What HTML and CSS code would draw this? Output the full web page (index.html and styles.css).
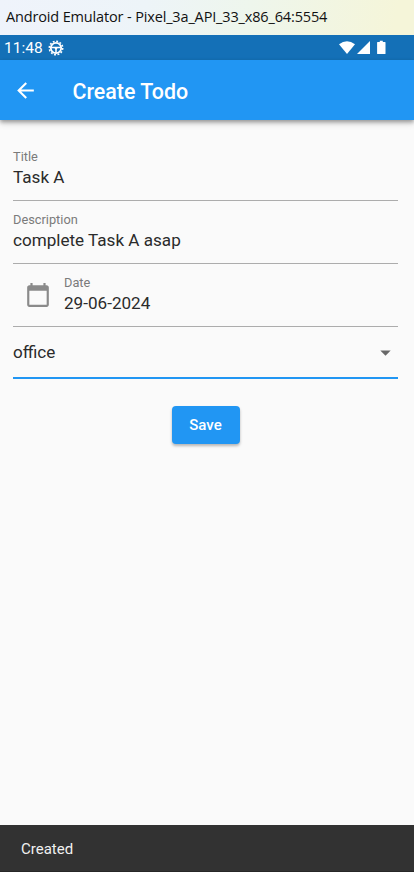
FILE: index.html
```html
<!DOCTYPE html>
<html lang="en">
<head>
<meta charset="utf-8">
<title>Create Todo</title>
<link rel="stylesheet" href="styles.css">
</head>
<body>
<div class="window-title"><span>Android Emulator - Pixel_3a_API_33_x86_64:5554</span></div>
<div class="status">
  <span class="clock">11:48</span>
  <svg class="gear" width="16" height="16" viewBox="0 0 16 16" fill="none" stroke="#fff">
    <circle cx="8" cy="8" r="5.2" stroke-width="1.8"/>
    <circle cx="8" cy="8" r="6.7" stroke-width="1.6" stroke-dasharray="1.9 1.608"/>
    <path d="M3.2 7.6h9.6M8 8v5" stroke-width="1.5"/>
    <path d="M5.8 7.2h4.4L8 10z" fill="#fff" stroke="none"/>
  </svg>
  <svg class="signals" width="48" height="16" viewBox="0 0 48 16" fill="#fff">
    <path d="M0 4.2Q8 -1.8 16 4.2L8 14z"/>
    <path d="M31 1v13H18z"/>
    <path d="M40.8 .8h3v1.3h2.2q.5 0 .5.5v10.9q0 .5-.5.5h-7.4q-.5 0-.5-.5v-10.9q0-.5.5-.5h2.2z"/>
  </svg>
</div>
<header class="appbar">
  <svg width="25" height="25" viewBox="0 0 24 24" fill="#fff"><path d="M20 11H7.83l5.59-5.59L12 4l-8 8 8 8 1.41-1.41L7.83 13H20v-2z"/></svg>
  <h1>Create Todo</h1>
</header>
<main>
  <div class="field"><label>Title</label><div class="value">Task A</div></div>
  <div class="field"><label>Description</label><div class="value">complete Task A asap</div></div>
  <div class="field date">
    <svg width="26" height="26" viewBox="0 0 24 24" fill="#8a8a8a"><path d="M20 3h-1V1h-2v2H7V1H5v2H4c-1.1 0-2 .9-2 2v16c0 1.1.9 2 2 2h16c1.1 0 2-.9 2-2V5c0-1.1-.9-2-2-2zm0 18H4V8h16v13z"/></svg>
    <div><label>Date</label><div class="value">29-06-2024</div></div>
  </div>
  <div class="select">
    <span class="value">office</span>
    <svg width="25" height="25" viewBox="0 0 24 24" fill="#686868"><path d="M7 10l5 5 5-5z"/></svg>
  </div>
  <button class="save">Save</button>
</main>
<footer class="snackbar">Created</footer>
</body>
</html>
```

FILE: styles.css
```css
* { box-sizing: border-box; }
body {
  margin: 0;
  height: 872px;
  display: flex;
  flex-direction: column;
  overflow: hidden;
  background: #fafafa;
  font-family: Roboto, sans-serif;
  color: #2b2b2b;
}
svg { display: block; flex: none; }
.window-title {
  height: 35px;
  padding-left: 6px;
  background: linear-gradient(100deg, #eff3fb 0%, #edf4f8 35%, #eef6ec 60%, #f5f5d9 95%);
  font: 14.5px/34px "Open Sans", "Noto Sans", sans-serif;
  letter-spacing: -0.15px;
  color: #111;
  white-space: nowrap;
}
.status {
  height: 25px;
  padding: 0 27px 0 4px;
  display: flex;
  align-items: center;
  background: #1470b7;
  color: #fff;
}
.clock { font-size: 15.5px; line-height: 25px; width: 44px; padding-top: 2px; }
.signals { margin-left: auto; }
.appbar {
  position: relative;
  height: 60px;
  padding: 1px 0 0 13px;
  display: flex;
  align-items: center;
  gap: 34.5px;
  background: #2196f3;
  color: #fff;
  box-shadow: 0 2px 4px rgba(0,0,0,.32), 0 4px 6px rgba(0,0,0,.12);
}
h1 { margin: 0; padding-top: 2px; font-size: 21.4px; font-weight: 500; line-height: 28px; }
main {
  flex: 1;
  display: flex;
  flex-direction: column;
  padding: 18px 16px 0 13px;
}
.field {
  height: 63px;
  padding-top: 11px;
  border-bottom: 1px solid #acacac;
}
label { display: block; font-size: 12.8px; line-height: 15px; color: #7b7b7b; }
.value { font-size: 17.1px; line-height: 26px; }
.date { display: flex; }
.date svg { margin: 7px 13px 0 12px; }
.select {
  height: 52px;
  display: flex;
  align-items: center;
  justify-content: space-between;
  border-bottom: 2px solid #2196f3;
}
.save {
  align-self: center;
  width: 68px;
  height: 38px;
  margin-top: 27px;
  padding: 0;
  border: 0;
  border-radius: 4px;
  background: #2196f3;
  box-shadow: 0 2px 3px rgba(0,0,0,.28);
  color: #fff;
  font: 500 15px/38px Roboto, sans-serif;
}
.snackbar {
  height: 47px;
  padding-left: 21px;
  background: #323232;
  border-bottom: 1px solid #272727;
  color: #f0f0f0;
  font-size: 15px;
  line-height: 48px;
}
```
